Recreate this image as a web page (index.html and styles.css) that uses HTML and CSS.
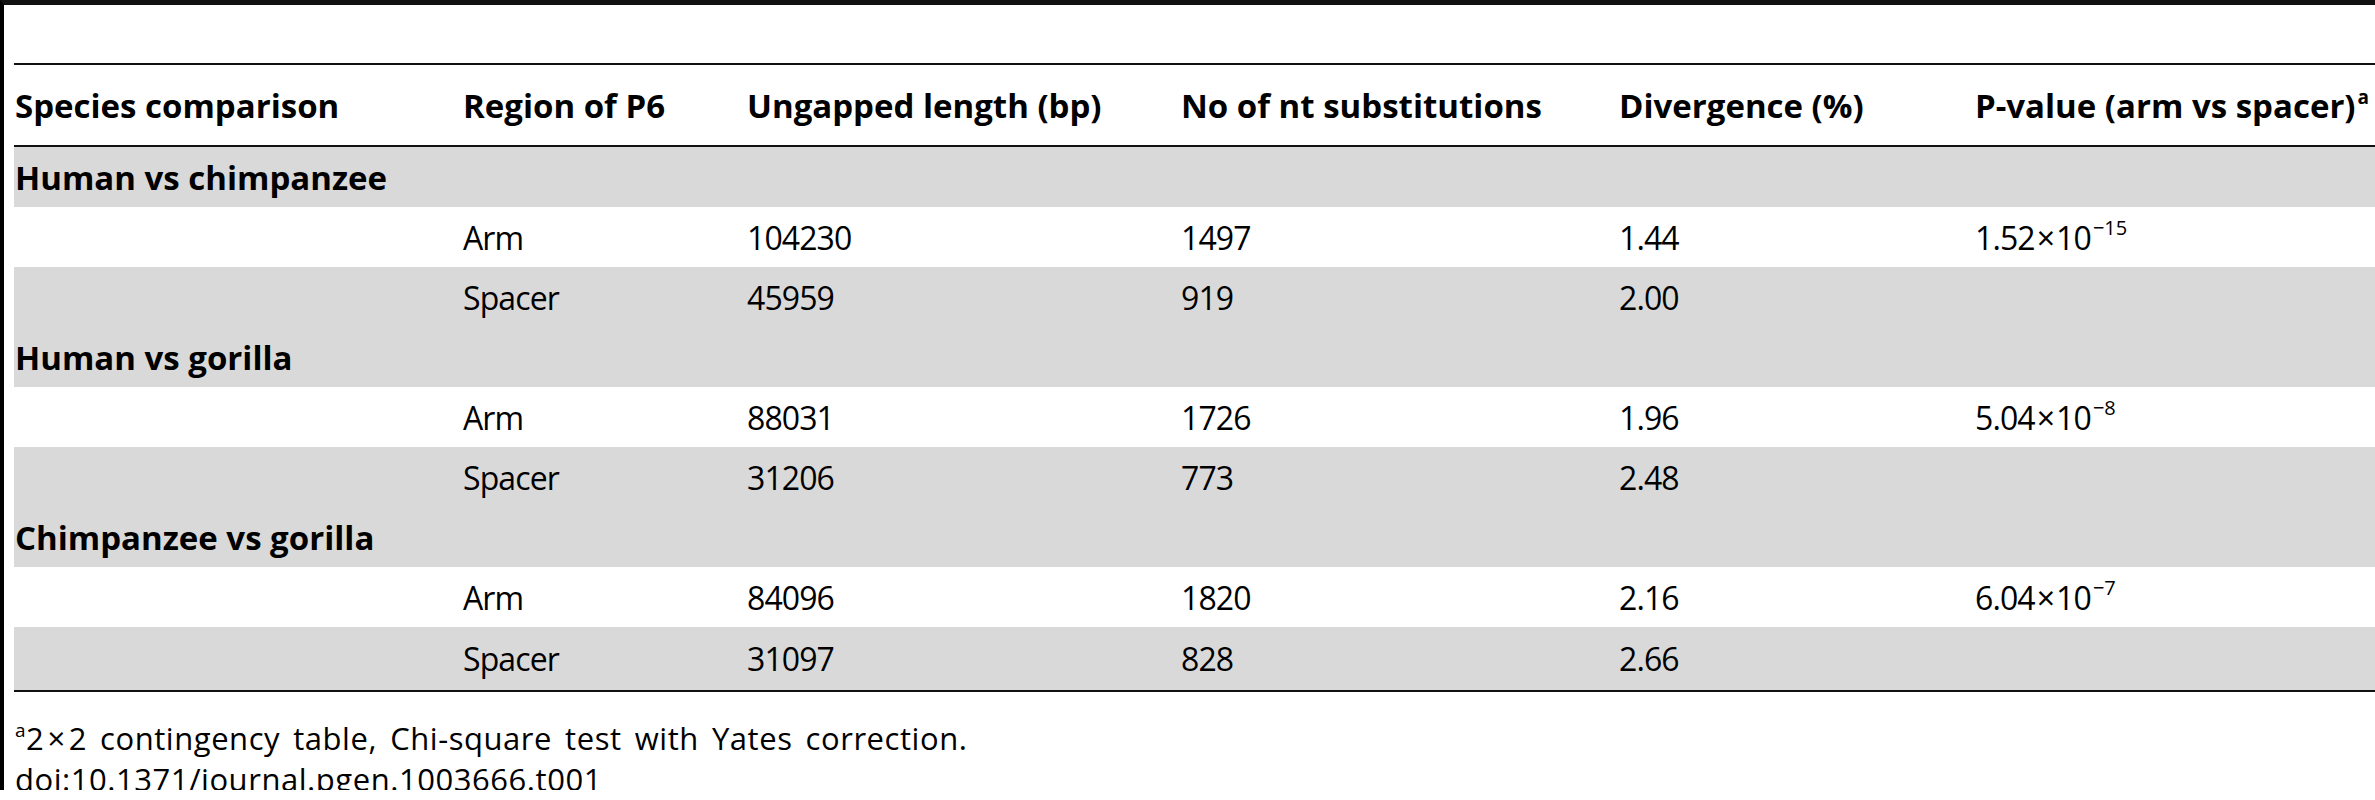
FILE: index.html
```html
<!DOCTYPE html>
<html lang="en">
<head>
<meta charset="utf-8">
<title>Table 1</title>
<link rel="stylesheet" href="styles.css">
</head>
<body>
<div class="frame">
  <table class="tbl">
    <colgroup>
      <col class="c1"><col class="c2"><col class="c3"><col class="c4"><col class="c5"><col class="c6">
    </colgroup>
    <thead>
      <tr>
        <th>Species comparison</th>
        <th>Region of P6</th>
        <th>Ungapped length (bp)</th>
        <th>No of nt substitutions</th>
        <th>Divergence (%)</th>
        <th>P-value (arm vs spacer)<sup class="hsup">a</sup></th>
      </tr>
    </thead>
    <tbody>
      <tr class="grp"><td colspan="6">Human vs chimpanzee</td></tr>
      <tr class="arm"><td></td><td>Arm</td><td>104230</td><td>1497</td><td>1.44</td><td>1.52<span class="times">×</span>10<sup class="exp">−15</sup></td></tr>
      <tr class="spc"><td></td><td>Spacer</td><td>45959</td><td>919</td><td>2.00</td><td></td></tr>
      <tr class="grp"><td colspan="6">Human vs gorilla</td></tr>
      <tr class="arm"><td></td><td>Arm</td><td>88031</td><td>1726</td><td>1.96</td><td>5.04<span class="times">×</span>10<sup class="exp">−8</sup></td></tr>
      <tr class="spc"><td></td><td>Spacer</td><td>31206</td><td>773</td><td>2.48</td><td></td></tr>
      <tr class="grp"><td colspan="6">Chimpanzee vs gorilla</td></tr>
      <tr class="arm"><td></td><td>Arm</td><td>84096</td><td>1820</td><td>2.16</td><td>6.04<span class="times">×</span>10<sup class="exp">−7</sup></td></tr>
      <tr class="spc last"><td></td><td>Spacer</td><td>31097</td><td>828</td><td>2.66</td><td></td></tr>
    </tbody>
  </table>
  <div class="notes">
    <p class="fn"><sup class="nsup">a</sup>2<span class="ntimes">×</span>2 contingency table, Chi-square test with Yates correction.</p>
    <p class="doi">doi:10.1371/journal.pgen.1003666.t001</p>
  </div>
</div>
</body>
</html>
```

FILE: styles.css
```css
html, body {
  margin: 0;
  padding: 0;
  background: #fff;
}

body {
  font-family: "Open Sans", "Liberation Sans", sans-serif;
  color: #000;
  overflow: hidden;
}

.frame {
  box-sizing: border-box;
  height: 790px;
  border-top: 5px solid #111;
  border-left: 4px solid #000;
  padding: 58px 0 0 10px;
}

.tbl {
  width: 100%;
  table-layout: fixed;
  border-collapse: separate;
  border-spacing: 0;
  font-size: 32px;
  letter-spacing: -0.9px;
}

.c1 { width: 448px; }
.c2 { width: 284px; }
.c3 { width: 434px; }
.c4 { width: 438px; }
.c5 { width: 356px; }

.tbl th,
.tbl td {
  padding: 0 0 0 1px;
  text-align: left;
  vertical-align: middle;
  white-space: nowrap;
}

.tbl thead tr {
  height: 84px;
}

.tbl th {
  font-size: 33px;
  font-weight: 700;
  letter-spacing: 0;
  border-top: 2px solid #111;
  border-bottom: 2px solid #111;
}

.tbl tbody tr {
  height: 60px;
}

.tbl tr.last {
  height: 65px;
}

.tbl tr.last td {
  border-bottom: 2px solid #111;
}

.tbl .grp td {
  font-size: 33px;
  font-weight: 700;
  letter-spacing: 0;
}

.tbl .grp,
.tbl .spc {
  background: #d9d9d9;
}

.tbl .arm {
  background: #fff;
}

.times {
  margin: 0 2px;
}

.hsup {
  font-size: 19px;
  line-height: 0;
  vertical-align: 14px;
  margin-left: 2px;
}

.exp {
  font-size: 20px;
  line-height: 0;
  vertical-align: 15px;
  margin-left: 2px;
  letter-spacing: 0;
}

.notes {
  margin-top: 26px;
  font-size: 31px;
  line-height: 41px;
  letter-spacing: 0.55px;
}

.notes p {
  margin: 0;
  padding-left: 1px;
}

.fn {
  word-spacing: 4.5px;
}

.ntimes {
  margin: 0 3px;
}

.nsup {
  font-size: 19px;
  line-height: 0;
  vertical-align: 13px;
}
```
